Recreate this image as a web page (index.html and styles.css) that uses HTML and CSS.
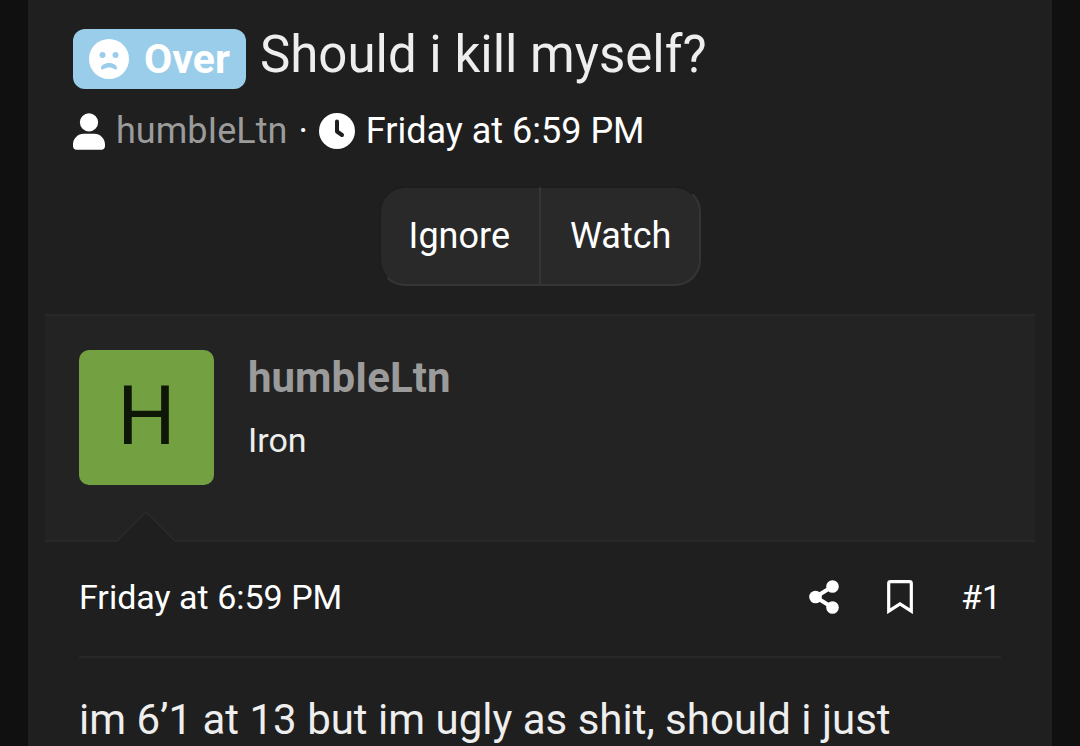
FILE: index.html
```
<!DOCTYPE html>
<html lang="en">
<head>
  <meta charset="utf-8">
  <meta name="viewport" content="width=device-width,initial-scale=1">
  <title>Thread</title>
  <link rel="stylesheet" href="styles.css">
</head>
<body>
  <main class="page">
    <header class="thread-header">
      <h1 class="title">
        <span class="label">
          <svg viewBox="0 0 40 40" aria-hidden="true">
            <circle cx="20" cy="20" r="20" fill="#fff"/>
            <circle cx="13.500" cy="16" r="3" fill="#9acdea"/>
            <circle cx="26.500" cy="16" r="3" fill="#9acdea"/>
            <path d="M12 28.500C13.500 22.500 26.500 22.500 28 28.500C28.300 30.600 26.700 31 25.500 30.100C22.500 28 17.500 28 14.500 30.100C13.300 31 11.700 30.600 12 28.500Z" fill="#9acdea"/>
          </svg>
          <span>Over</span>
        </span>
        <span>Should i kill myself?</span>
      </h1>
      <div class="meta">
        <svg class="user-icon" viewBox="0 0 448 512" aria-hidden="true"><path fill="currentColor" d="M224 256A128 128 0 1 0 224 0a128 128 0 1 0 0 256zM150 288C67 288 0 355 0 438V460C0 490 20 512 50 512H398C428 512 448 490 448 460V438C448 355 381 288 298 288Z"/></svg>
        <a class="author" href="#user">humbIeLtn</a>
        <span>·</span>
        <svg class="clock-icon" viewBox="0 0 36 36" aria-hidden="true">
          <circle cx="18" cy="18" r="18" fill="currentColor"/>
          <path d="M18 8.500V18.500L23 22" fill="none" stroke="#1f1f1f" stroke-width="4" stroke-linecap="round" stroke-linejoin="round"/>
        </svg>
        <a href="#post-1"><time>Friday at 6:59 PM</time></a>
      </div>
      <div class="buttons">
        <button type="button">Ignore</button>
        <button type="button">Watch</button>
      </div>
    </header>

    <article class="post" id="post-1">
      <div class="user" id="user">
        <a class="avatar" href="#user">H</a>
        <div class="user-text">
          <a class="name" href="#user">humbIeLtn</a>
          <span class="rank">Iron</span>
        </div>
        <svg class="arrow" viewBox="0 0 64 32" aria-hidden="true">
          <path d="M2 32L32 2L62 32Z" fill="#1f1f1f"/>
          <path d="M0 31H3L32 2L61 31H64" fill="none" stroke="#282828" stroke-width="2"/>
        </svg>
      </div>
      <div class="post-main">
        <div class="post-header">
          <a href="#post-1"><time>Friday at 6:59 PM</time></a>
          <div class="actions">
            <a href="#share" aria-label="Share">
              <svg class="share-icon" viewBox="0 0 30 34" aria-hidden="true">
                <path d="M23.500 6.500L6.500 17L23.500 27.500" fill="none" stroke="currentColor" stroke-width="4"/>
                <circle cx="23.500" cy="6.500" r="6.300" fill="currentColor"/>
                <circle cx="6.500" cy="17" r="6.300" fill="currentColor"/>
                <circle cx="23.500" cy="27.500" r="6.300" fill="currentColor"/>
              </svg>
            </a>
            <a href="#bookmark" aria-label="Add bookmark">
              <svg class="bookmark-icon" viewBox="0 0 26 34" aria-hidden="true"><path d="M1.700 31.200V3.500Q1.700 1.700 3.500 1.700H22.500Q24.300 1.700 24.300 3.500V31.200L13 24Z" fill="none" stroke="currentColor" stroke-width="3.200"/></svg>
            </a>
            <a href="#post-1">#1</a>
          </div>
        </div>
        <p class="message">im 6’1 at 13 but im ugly as shit, should i just</p>
      </div>
    </article>
  </main>
</body>
</html>
```
FILE: styles.css
```
* { box-sizing: border-box; }
body { margin: 0; padding: 0 28px; background: #101010; color: #fff; font-family: Roboto, sans-serif; }
a { color: inherit; text-decoration: none; }
svg { display: block; flex: none; }
.page { min-height: 100vh; padding-top: 21px; background: #1f1f1f; }

.thread-header { padding: 0 45px; }
.title { display: flex; align-items: center; gap: 14px; margin: 0; color: #eee; font-size: 51px; font-weight: 400; line-height: 62px; }
.label { display: flex; align-items: center; gap: 15px; height: 60px; margin-top: 8px; padding: 0 16px; border-radius: 12px; background: #9acdea; color: #fff; font-size: 41px; font-weight: 700; }
.label svg { width: 40px; height: 40px; }
.meta { display: flex; align-items: center; gap: 11px; margin-top: 17px; font-size: 36px; line-height: 50px; }
.user-icon { width: 32px; height: 37px; }
.clock-icon { width: 36px; height: 36px; }
.author, .name { color: #9b9b9b; }

.buttons { display: flex; width: fit-content; margin: 30px auto 0; }
.buttons button { height: 100px; padding: 0 29px; border: 2px solid; border-color: #1d1d1d #353535 #353535 #1d1d1d; background: #292929; color: #fff; font-family: inherit; font-size: 36px; cursor: pointer; }
.buttons button:first-child { padding-left: 28px; border-radius: 26px 0 0 26px; }
.buttons button:last-child { padding-right: 28px; border-left: 0; border-radius: 0 26px 26px 0; }

.post { margin: 28px 17px 0; }
.user { position: relative; display: flex; gap: 34px; height: 228px; padding: 34px; border-top: 2px solid #282828; border-bottom: 2px solid #282828; background: #232323; }
.avatar { width: 135px; height: 135px; border-radius: 10px; background: #73a142; color: #0e1607; font-size: 82px; line-height: 133px; text-align: center; }
.user-text { display: flex; flex-direction: column; gap: 14px; }
.name { font-size: 42px; font-weight: 700; line-height: 56px; }
.rank { color: #eee; font-size: 34px; line-height: 40px; }
.arrow { position: absolute; bottom: -2px; left: 69px; width: 64px; height: 32px; }

.post-main { padding: 0 34px; }
.post-header { display: flex; justify-content: space-between; align-items: center; height: 116px; padding-bottom: 4px; border-bottom: 2px solid #282828; font-size: 34px; }
.actions { display: flex; align-items: center; gap: 48px; }
.share-icon { width: 30px; height: 34px; }
.bookmark-icon { width: 26px; height: 34px; }
.message { margin: 37px 0 0; color: #eee; font-size: 42px; line-height: 50px; }
```
